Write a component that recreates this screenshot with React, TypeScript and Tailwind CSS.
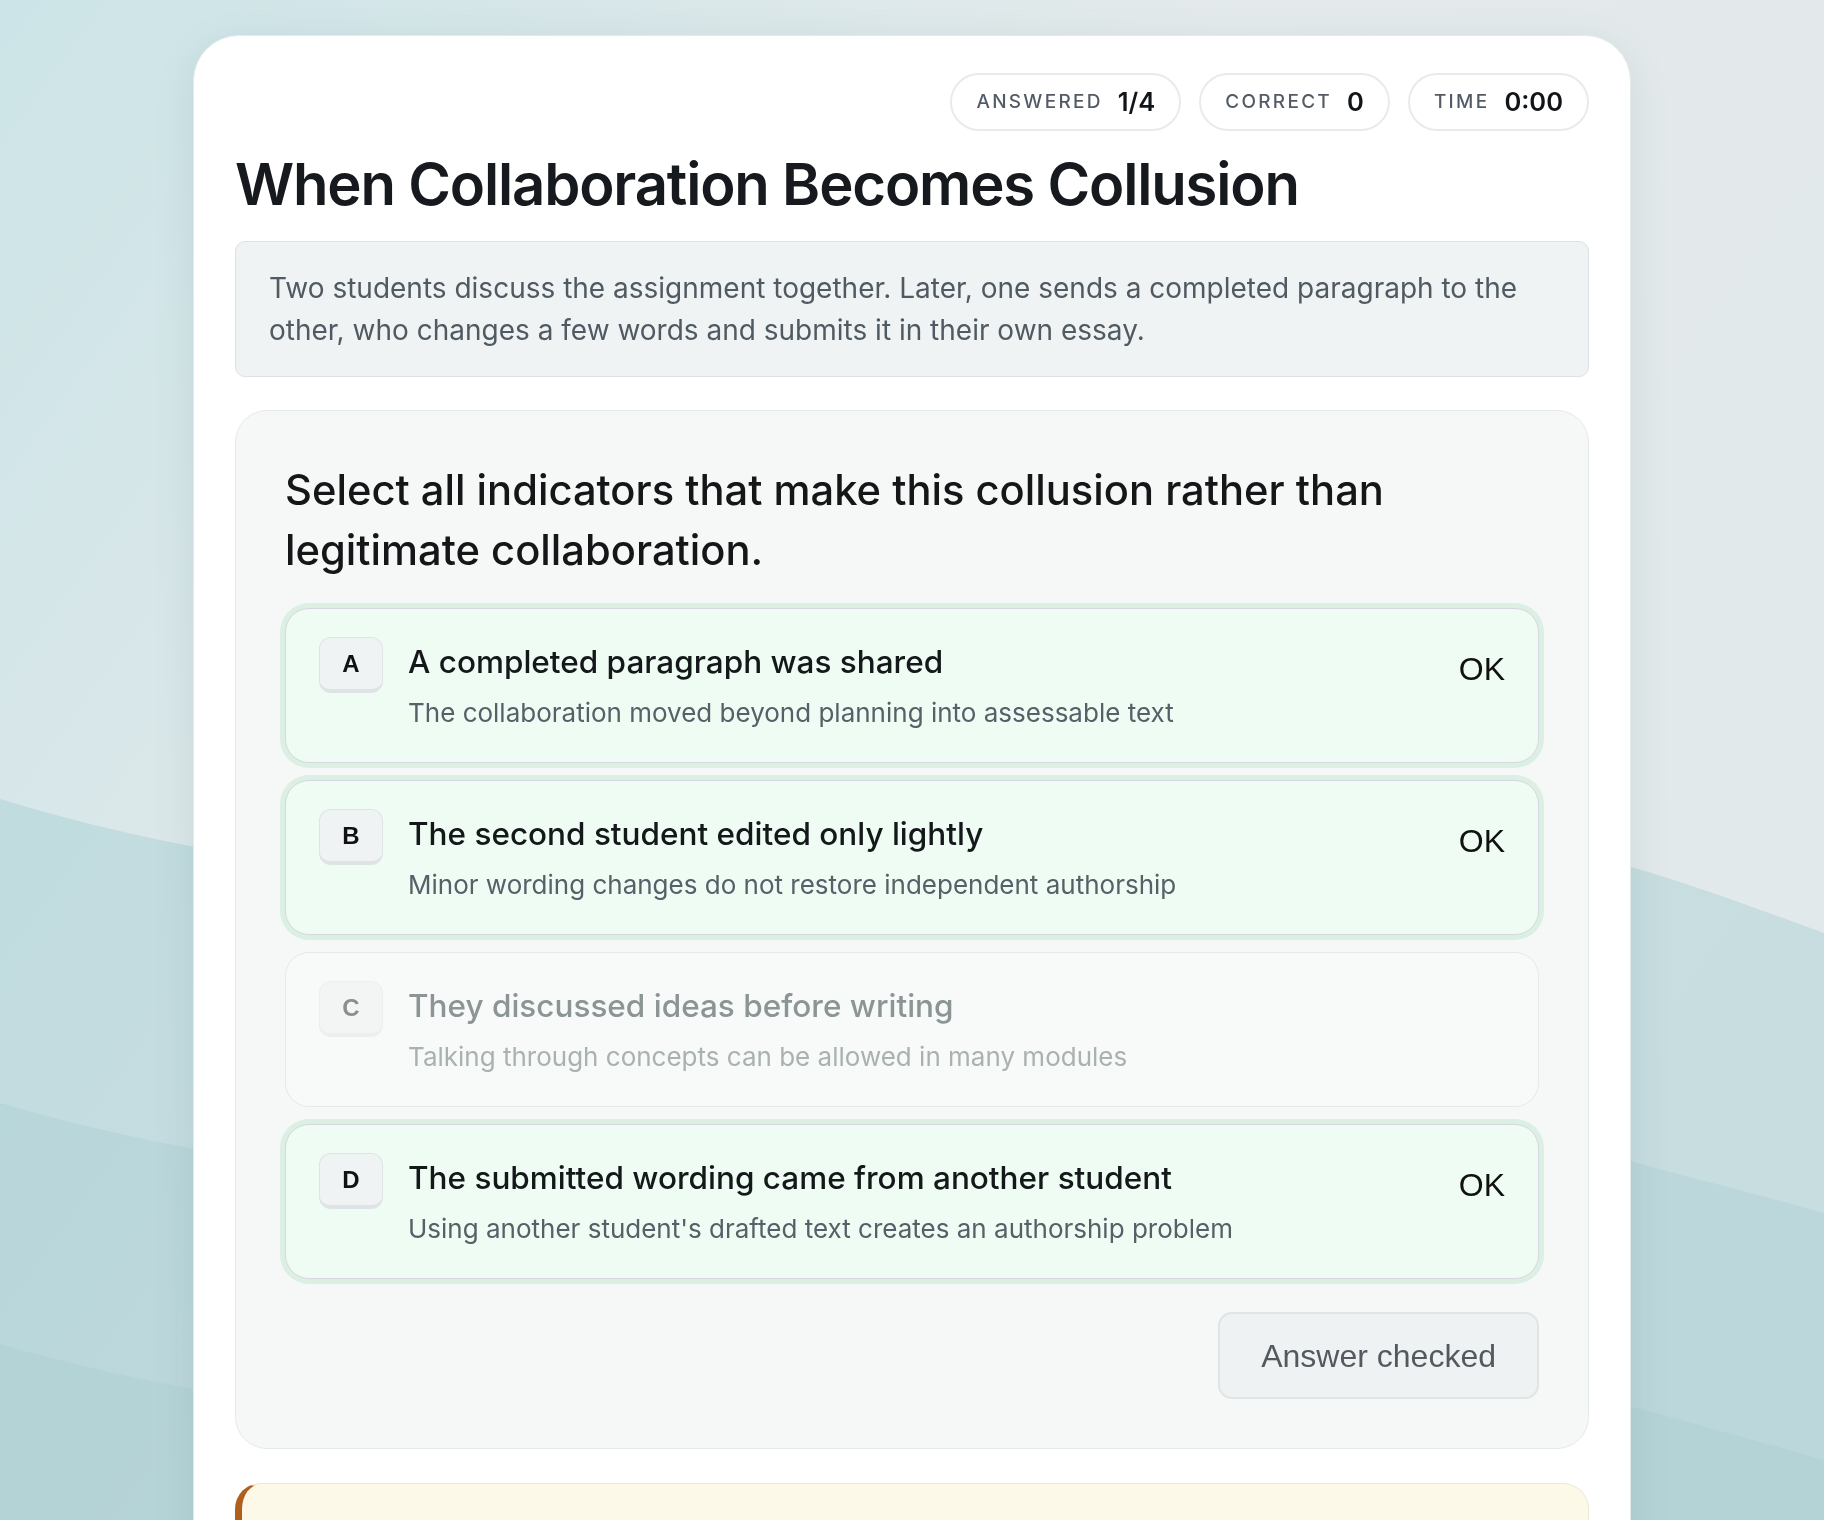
import React from "react";

interface Option {
    key: string;
    title: string;
    hint: string;
    picked: boolean;
}

const options: Option[] = [
    { key: "A", title: "A completed paragraph was shared", hint: "The collaboration moved beyond planning into assessable text", picked: true },
    { key: "B", title: "The second student edited only lightly", hint: "Minor wording changes do not restore independent authorship", picked: true },
    { key: "C", title: "They discussed ideas before writing", hint: "Talking through concepts can be allowed in many modules", picked: false },
    { key: "D", title: "The submitted wording came from another student", hint: "Using another student's drafted text creates an authorship problem", picked: true },
];

const stats = [
    { label: "ANSWERED", value: "1/4" },
    { label: "CORRECT", value: "0" },
    { label: "TIME", value: "0:00" },
];

const Backdrop = () => (
    <svg className="fixed inset-0 h-[1520px] w-[1824px]" viewBox="0 0 1824 1520" preserveAspectRatio="none">
        <defs>
            <linearGradient id="sky" x1="0" y1="0" x2="1" y2="0.6">
                <stop offset="0" stopColor="#cce4e7" />
                <stop offset="0.5" stopColor="#e4eaeb" />
                <stop offset="1" stopColor="#e2e9ea" />
            </linearGradient>
        </defs>
        <rect width="1824" height="1520" fill="url(#sky)" />
        <path d="M0,799 C300,890 600,900 900,860 C1200,820 1500,830 1631,867 C1700,887 1760,910 1824,933 L1824,1520 L0,1520 Z" fill="#8fc3ca" fillOpacity="0.32" />
        <path d="M0,1103 C300,1190 600,1200 900,1160 C1200,1120 1500,1125 1633,1162 C1700,1180 1760,1195 1824,1213 L1824,1520 L0,1520 Z" fill="#8fc3ca" fillOpacity="0.2" />
        <path d="M0,1344 C300,1430 600,1440 900,1400 C1200,1365 1500,1370 1633,1407 C1700,1425 1760,1442 1824,1460 L1824,1520 L0,1520 Z" fill="#8fc3ca" fillOpacity="0.16" />
    </svg>
);

const OptionCard = ({ option }: { option: Option }) => (
    <div
        className={
            option.picked
                ? "flex items-start rounded-[24px] border border-[#d7d7e2] bg-[#effcf3] px-[33px] pt-[28px] pb-[32px] shadow-[0_0_0_5px_#dcefe3]"
                : "flex items-start rounded-[24px] border border-[#e4e9e9] bg-[#f8fafa] px-[33px] pt-[28px] pb-[32px]"
        }
    >
        <div
            className={
                option.picked
                    ? "mr-[25px] flex h-[56px] w-[64px] shrink-0 items-center justify-center rounded-[12px] border border-b-[4px] border-[#dfe3e6] bg-[#f0f3f3] font-['Liberation_Sans',sans-serif] text-[24px] font-bold text-[#111]"
                    : "mr-[25px] flex h-[56px] w-[64px] shrink-0 items-center justify-center rounded-[12px] border border-b-[4px] border-[#eceef0] bg-[#f3f5f5] font-['Liberation_Sans',sans-serif] text-[24px] font-bold text-[#8a8e90]"
            }
        >
            {option.key}
        </div>
        <div className="flex-1">
            <div className={option.picked ? "text-[31.5px] font-medium leading-[50px] text-[#15181b]" : "text-[31.5px] font-medium leading-[50px] text-[#8c9595]"}>
                {option.title}
            </div>
            <div className={option.picked ? "mt-[9px] text-[26px] leading-[34px] text-[#566068]" : "mt-[9px] text-[26px] leading-[34px] text-[#a9b1b1]"}>
                {option.hint}
            </div>
        </div>
        {option.picked && (
            <div className="mt-[14px] font-['Liberation_Sans',sans-serif] text-[32px] leading-[37px] text-[#111]">OK</div>
        )}
    </div>
);

export default function App() {
    return (
        <div className="relative min-h-screen font-['Inter',sans-serif]">
            <Backdrop />
            <div className="relative pt-[35px]">
                <div className="mx-auto w-[1438px] rounded-[46px] border border-[#e3eaeb] bg-white px-[41px] pt-[37px] pb-[40px] shadow-[0_10px_40px_rgba(60,100,110,0.12)]">
                    <div className="flex justify-end gap-[18px]">
                        {stats.map((s) => (
                            <div key={s.label} className="flex h-[58px] items-center gap-[15px] rounded-full border-2 border-[#e8ebed] bg-white px-[24px]">
                                <span className="text-[19px] font-medium tracking-[0.12em] text-[#535c66]">{s.label}</span>
                                <span className="text-[25.5px] font-semibold text-[#111418]">{s.value}</span>
                            </div>
                        ))}
                    </div>

                    <h1 className="mt-[18px] text-[58px] font-semibold leading-[70px] tracking-[-0.02em] text-[#16191d]">
                        When Collaboration Becomes Collusion
                    </h1>

                    <div className="mt-[22px] rounded-[10px] border border-[#dde3e4] bg-[#f0f3f3] px-[33px] py-[25px]">
                        <p className="text-[28px] leading-[42px] text-[#505a63]">
                            Two students discuss the assignment together. Later, one sends a completed paragraph to the other, who changes a few words and submits it in their own essay.
                        </p>
                    </div>

                    <div className="mt-[33px] rounded-[32px] border border-[#e6eaeb] bg-[#f6f8f8] px-[49px] pt-[49px] pb-[49px]">
                        <h2 className="pr-[40px] text-[41.7px] font-medium leading-[60px] text-[#141618]">
                            Select all indicators that make this collusion rather than legitimate collaboration.
                        </h2>
                        <div className="mt-[28px] flex flex-col gap-[17px]">
                            {options.map((o) => (
                                <OptionCard key={o.key} option={o} />
                            ))}
                        </div>
                        <div className="mt-[33px] flex justify-end">
                            <button className="h-[87px] rounded-[14px] border-2 border-[#dfe4e5] bg-[#eff2f2] px-[41px] font-['Liberation_Sans',sans-serif] text-[32px] text-[#525a60]">
                                Answer checked
                            </button>
                        </div>
                    </div>

                    <div className="mt-[34px] h-[220px] rounded-[26px] border border-[#efe9d6] border-l-[7px] border-l-[#b0601e] bg-[#fdf9e8]" />
                </div>
            </div>
        </div>
    );
}
